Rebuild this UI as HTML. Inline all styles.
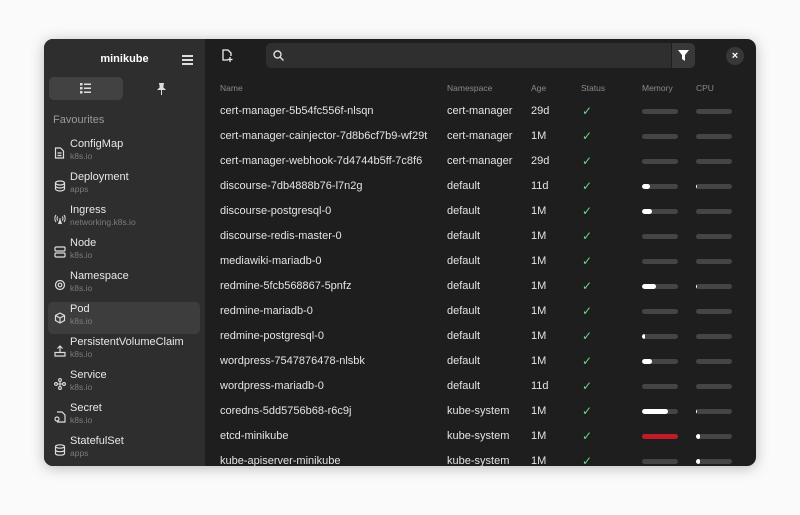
<!DOCTYPE html>
<html><head><meta charset="utf-8"><style>
*{margin:0;padding:0;box-sizing:border-box}
body{width:800px;height:515px;background:#fafafa;font-family:"Liberation Sans","DejaVu Sans",sans-serif;position:relative;overflow:hidden}
.win{position:absolute;left:44px;top:39px;width:712px;height:427px;border-radius:9px;overflow:hidden;background:#1e1e1e;box-shadow:0 2px 14px rgba(0,0,0,.25)}
.side{position:absolute;left:0;top:0;width:161px;height:100%;background:#2e2e2e}
.title{position:absolute;left:0;width:161px;top:14px;text-align:center;color:#fff;font-weight:bold;font-size:11px}
.burger{position:absolute;left:138px;top:16px;width:11px}
.burger i{display:block;height:1.5px;background:#ddd;margin-bottom:2.5px}
.tabsel{position:absolute;left:5px;top:38px;width:74px;height:23px;border-radius:5px;background:#424242}
.fav{position:absolute;left:9px;top:75px;color:#9a9a9a;font-size:11px}
.it{position:absolute;left:4px;width:152px;height:32px;border-radius:5px}
.it .t{position:absolute;left:22px;top:1px;color:#e8e8e8;font-size:11px}
.it .s{position:absolute;left:22px;top:14px;color:#7c7c7c;font-size:8.5px}
.it svg{position:absolute;left:6px;top:10px}
.main{position:absolute;left:161px;top:0;right:0;bottom:0}
.search{position:absolute;left:61px;top:4px;width:429px;height:25px;border-radius:5px;background:#2f2f2f}
.filt{position:absolute;left:466px;top:4px;width:24px;height:25px;border-left:1px solid #1e1e1e;border-radius:0 5px 5px 0;background:#383838}
.close{position:absolute;left:521px;top:8px;width:18px;height:18px;border-radius:9px;background:#383838;color:#fff;font-size:11px;text-align:center;line-height:18px;font-weight:bold}
.h{position:absolute;top:44px;color:#8a8a8a;font-size:8.5px}
.r{position:absolute;left:0;width:540px;height:25px;color:#e4e4e4;font-size:11px}
.r span{position:absolute;top:0}
.bar{position:absolute;height:5px;width:36px;border-radius:3px;background:#454545;top:4px;overflow:hidden}
.bar b{position:absolute;left:0;top:0;bottom:0;background:#fff;border-radius:3px}
.chk{color:#6fd88a;font-size:12px;font-weight:bold}
.sb{position:absolute;left:708px;top:42px;width:3px;height:255px;border-radius:2px;background:#555}
</style></head><body>
<div class="win">
<div class="side">
<div class="title">minikube</div>
<div class="burger"><i></i><i></i><i></i></div>
<div class="tabsel"></div>
<svg style="position:absolute;left:36px;top:44px" width="11" height="11" viewBox="0 0 11 11" fill="#ddd"><rect x="0" y="0" width="2.5" height="2.5"/><rect x="0" y="4" width="2.5" height="2.5"/><rect x="0" y="8" width="2.5" height="2.5"/><rect x="4" y="0.5" width="7" height="1.5"/><rect x="4" y="4.5" width="7" height="1.5"/><rect x="4" y="8.5" width="7" height="1.5"/></svg>
<svg style="position:absolute;left:113px;top:44px" width="9" height="12" viewBox="0 0 9 12" fill="#ddd"><rect x="2" y="0" width="5" height="1.5"/><rect x="2.5" y="1" width="4" height="4"/><path d="M0 7 L2 5 L7 5 L9 7 Z"/><rect x="4" y="7" width="1" height="5"/></svg>
<div class="fav">Favourites</div>
<div class="it" style="top:98px"><svg width="11" height="12" viewBox="0 0 11 12" fill="none" stroke="#ddd" stroke-width="1.2"><path d="M1.5 1h5l3 3v7h-8z M3.5 6h4 M3.5 8.5h4"/></svg><div class="t">ConfigMap</div><div class="s">k8s.io</div></div>
<div class="it" style="top:131px"><svg width="12" height="12" viewBox="0 0 12 12" fill="none" stroke="#ddd" stroke-width="1.2"><ellipse cx="6" cy="3" rx="4.5" ry="2"/><path d="M1.5 3v6c0 1 2 2 4.5 2s4.5-1 4.5-2V3 M1.5 6c0 1 2 2 4.5 2s4.5-1 4.5-2"/></svg><div class="t">Deployment</div><div class="s">apps</div></div>
<div class="it" style="top:164px"><svg width="12" height="12" viewBox="0 0 12 12" fill="none" stroke="#ddd" stroke-width="1.1"><path d="M2 2a6 6 0 0 0 0 7 M10 2a6 6 0 0 1 0 7 M3.8 3.5a3 3 0 0 0 0 4 M8.2 3.5a3 3 0 0 1 0 4 M6 5v6 M4.5 11l1.5-4 1.5 4"/></svg><div class="t">Ingress</div><div class="s">networking.k8s.io</div></div>
<div class="it" style="top:197px"><svg width="12" height="12" viewBox="0 0 12 12" fill="none" stroke="#ddd" stroke-width="1.2"><rect x="1" y="1" width="10" height="4" rx="1"/><rect x="1" y="7" width="10" height="4" rx="1"/></svg><div class="t">Node</div><div class="s">k8s.io</div></div>
<div class="it" style="top:230px"><svg width="12" height="12" viewBox="0 0 12 12" fill="none" stroke="#ddd" stroke-width="1.2"><circle cx="6" cy="6" r="4.5"/><circle cx="6" cy="6" r="1.8"/></svg><div class="t">Namespace</div><div class="s">k8s.io</div></div>
<div class="it" style="top:263px;background:#3d3d3d"><svg width="12" height="12" viewBox="0 0 12 12" fill="none" stroke="#ddd" stroke-width="1.2"><path d="M6 1l4.5 2.5v5L6 11 1.5 8.5v-5z M1.5 3.5L6 6l4.5-2.5 M6 6v5"/></svg><div class="t">Pod</div><div class="s">k8s.io</div></div>
<div class="it" style="top:296px"><svg width="12" height="12" viewBox="0 0 12 12" fill="none" stroke="#ddd" stroke-width="1.2"><path d="M6 1v6 M3.5 3.5L6 1l2.5 2.5 M1 7.5h10v3.5H1z"/></svg><div class="t">PersistentVolumeClaim</div><div class="s">k8s.io</div></div>
<div class="it" style="top:329px"><svg width="12" height="12" viewBox="0 0 12 12" fill="none" stroke="#ddd" stroke-width="1.1"><circle cx="6" cy="2" r="1.4"/><circle cx="2" cy="6" r="1.4"/><circle cx="10" cy="6" r="1.4"/><circle cx="6" cy="10" r="1.4"/><path d="M3.4 6h5.2 M6 3.4v5.2"/></svg><div class="t">Service</div><div class="s">k8s.io</div></div>
<div class="it" style="top:362px"><svg width="12" height="12" viewBox="0 0 12 12" fill="none" stroke="#ddd" stroke-width="1.2"><path d="M3 1h5l3 3v7H3 M1 8a2 2 0 1 0 4 0a2 2 0 1 0-4 0"/></svg><div class="t">Secret</div><div class="s">k8s.io</div></div>
<div class="it" style="top:395px"><svg width="12" height="12" viewBox="0 0 12 12" fill="none" stroke="#ddd" stroke-width="1.2"><ellipse cx="6" cy="2.5" rx="4.5" ry="1.7"/><path d="M1.5 2.5v7c0 1 2 1.7 4.5 1.7s4.5-.7 4.5-1.7v-7 M1.5 6c0 1 2 1.7 4.5 1.7s4.5-.7 4.5-1.7"/></svg><div class="t">StatefulSet</div><div class="s">apps</div></div>
</div>
<div class="main">
<svg style="position:absolute;left:17px;top:10px" width="12" height="13" viewBox="0 0 12 13" fill="none" stroke="#eee" stroke-width="1.3"><path d="M6 11H1V1h5l3 3v3 M8 8v5 M5.5 10.5h5"/></svg>
<div class="search"><svg style="position:absolute;left:7px;top:7px" width="11" height="11" viewBox="0 0 11 11" fill="none" stroke="#ddd" stroke-width="1.4"><circle cx="4.5" cy="4.5" r="3.5"/><path d="M7 7l3.5 3.5"/></svg></div>
<div class="filt"><svg style="position:absolute;left:6px;top:7px" width="11" height="11" viewBox="0 0 11 11" fill="#fff"><path d="M0 0h11L7 5v6L4 9V5z"/></svg></div>
<div class="close">×</div>
<div class="h" style="left:15px">Name</div><div class="h" style="left:242px">Namespace</div><div class="h" style="left:326px">Age</div><div class="h" style="left:376px">Status</div><div class="h" style="left:437px">Memory</div><div class="h" style="left:491px">CPU</div>
<div class="sb"></div>
<div id="rows"></div>
</div>
</div>
<script>
var d=[["cert-manager-5b54fc556f-nlsqn","cert-manager","29d",0,0],["cert-manager-cainjector-7d8b6cf7b9-wf29t","cert-manager","1M",0,0],["cert-manager-webhook-7d4744b5ff-7c8f6","cert-manager","29d",0,0],["discourse-7db4888b76-l7n2g","default","11d",8,1],["discourse-postgresql-0","default","1M",10,0],["discourse-redis-master-0","default","1M",0,0],["mediawiki-mariadb-0","default","1M",0,0],["redmine-5fcb568867-5pnfz","default","1M",14,1],["redmine-mariadb-0","default","1M",0,0],["redmine-postgresql-0","default","1M",3,0],["wordpress-7547876478-nlsbk","default","1M",10,0],["wordpress-mariadb-0","default","11d",0,0],["coredns-5dd5756b68-r6c9j","kube-system","1M",26,1],["etcd-minikube","kube-system","1M",-1,4],["kube-apiserver-minikube","kube-system","1M",0,4]];
var h="";d.forEach(function(r,i){var y=66+i*25;
var m=r[3]<0?'<b style="width:36px;background:#c01c28"></b>':(r[3]?'<b style="width:'+r[3]+'px"></b>':'');
var c=r[4]?'<b style="width:'+r[4]+'px"></b>':'';
h+='<div class="r" style="top:'+y+'px"><span style="left:15px">'+r[0]+'</span><span style="left:242px">'+r[1]+'</span><span style="left:326px">'+r[2]+'</span><span class="chk" style="left:377px;top:-1px">✓</span><div class="bar" style="left:437px">'+m+'</div><div class="bar" style="left:491px">'+c+'</div></div>';});
document.getElementById("rows").innerHTML=h;
</script>
</body></html>
